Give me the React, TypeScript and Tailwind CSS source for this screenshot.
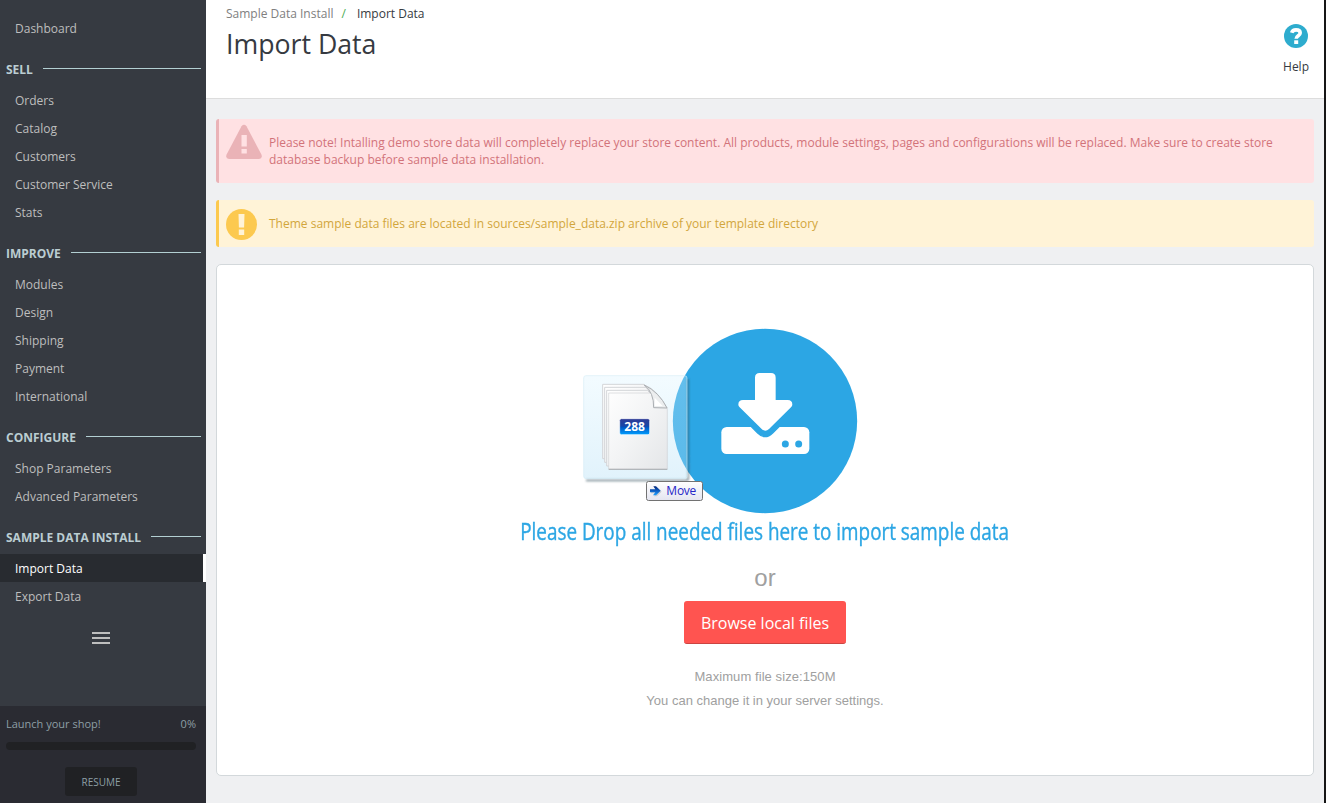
import React from "react";

type Section = { title: string; items: string[] };

const sections: Section[] = [
  { title: "SELL", items: ["Orders", "Catalog", "Customers", "Customer Service", "Stats"] },
  { title: "IMPROVE", items: ["Modules", "Design", "Shipping", "Payment", "International"] },
  { title: "CONFIGURE", items: ["Shop Parameters", "Advanced Parameters"] },
  { title: "SAMPLE DATA INSTALL", items: ["Import Data", "Export Data"] },
];

function NavItem({ label, active = false }: { label: string; active?: boolean }) {
  return (
    <a
      className={
        active
          ? "flex h-7 items-center border-r-3 border-white bg-[#282b30] pt-[2px] pl-[15px] text-white"
          : "flex h-7 items-center pt-[2px] pl-[15px] text-[#bebebe]"
      }
    >
      {label}
    </a>
  );
}

function Sidebar() {
  return (
    <aside className="flex w-[206px] shrink-0 flex-col bg-[#363a41] text-[12px]">
      <nav className="flex flex-1 flex-col pt-[14px]">
        <NavItem label="Dashboard" />
        {sections.map((s) => (
          <div key={s.title}>
            <div className="flex h-11 items-center gap-[10px] pt-[10px] pr-[5px] pl-[6px]">
              <h2 className="pt-[2px] font-bold whitespace-nowrap text-[#bbcdd2]">{s.title}</h2>
              <span className="mb-[2px] h-px flex-1 bg-[#b3cfd2]" />
            </div>
            {s.items.map((i) => (
              <NavItem key={i} label={i} active={i === "Import Data"} />
            ))}
          </div>
        ))}
        <div className="mt-[22px] ml-[92px] flex w-[18px] flex-col gap-[3px]">
          <span className="h-[2px] bg-[#bebebe]" />
          <span className="h-[2px] bg-[#bebebe]" />
          <span className="h-[2px] bg-[#bebebe]" />
        </div>
      </nav>
      <div className="flex h-[97px] flex-col bg-[#2a2b32] pt-[10px] pl-[6px] text-[11px] text-[#8d9fa5]">
        <div className="flex h-4 items-center justify-between pt-px pr-[10px]">
          <span>Launch your shop!</span>
          <span>0%</span>
        </div>
        <div className="mt-[10px] h-2 w-[190px] rounded-full bg-[#202124]" />
        <button className="mt-[17px] ml-[59px] h-[29px] w-[72px] rounded-[3px] bg-[#202124] pt-[2px] text-[10px]">
          RESUME
        </button>
      </div>
    </aside>
  );
}

function DropArt() {
  return (
    <svg className="block h-[200px] w-[300px]" viewBox="0 0 900 600">
      <circle cx="585" cy="303" r="276.500" fill="#2ca6e4" />
      <rect x="454" y="321" width="264" height="81" rx="16" fill="#fff" />
      <path d="M540 316L563 339Q585 361 608 339L631 316Z" fill="#2ca6e4" stroke="#2ca6e4" strokeWidth="4" />
      <path
        d="M569 159H603Q617 159 617 173V240H653Q667 240 667 254Q667 258 663 262L597 327Q586 337 575 327L509 262Q505 258 505 254Q505 240 519 240H555V173Q555 159 569 159Z"
        fill="#fff"
      />
      <circle cx="646" cy="372" r="10.500" fill="#2ca6e4" />
      <circle cx="686" cy="372" r="10.500" fill="#2ca6e4" />
    </svg>
  );
}

function DragGhost() {
  return (
    <svg className="absolute top-[45px] left-[8px] h-[145px] w-[130px]" viewBox="24 135 390 435">
      <defs>
        <linearGradient id="tile" x1="0" y1="0" x2="0" y2="1">
          <stop offset="0" stopColor="#d8f3ff" stopOpacity=".32" />
          <stop offset="1" stopColor="#abdcf5" stopOpacity=".36" />
        </linearGradient>
        <linearGradient id="sheet" x1="0" y1="0" x2="1" y2="1">
          <stop offset="0" stopColor="#ffffff" />
          <stop offset=".5" stopColor="#f3f4f5" />
          <stop offset="1" stopColor="#e4e6e8" />
        </linearGradient>
        <linearGradient id="count" x1="0" y1="0" x2="0" y2="1">
          <stop offset="0" stopColor="#303b96" />
          <stop offset=".48" stopColor="#1748a8" />
          <stop offset=".5" stopColor="#0050bd" />
          <stop offset="1" stopColor="#009fff" />
        </linearGradient>
        <linearGradient id="tip" x1="0" y1="0" x2="0" y2="1">
          <stop offset="0" stopColor="#ffffff" />
          <stop offset="1" stopColor="#e4e5f0" />
        </linearGradient>
        <linearGradient id="arrow" x1="0" y1="0" x2="0" y2="1">
          <stop offset="0" stopColor="#00257a" />
          <stop offset=".5" stopColor="#0f5fc4" />
          <stop offset="1" stopColor="#1ea0ff" />
        </linearGradient>
        <filter id="soft" x="-10%" y="-10%" width="120%" height="120%">
          <feGaussianBlur stdDeviation="3" />
        </filter>
      </defs>
      <path d="M354 176L355 474Q355 481 347 481H48" fill="none" stroke="#37515f" strokeOpacity=".65" strokeWidth="5" filter="url(#soft)" />
      <rect x="41" y="167" width="310" height="309" rx="7" fill="url(#tile)" stroke="#d3edf7" strokeWidth="3" strokeOpacity=".6" />
      <g stroke="#d3d5d8" strokeWidth="3">
        <path d="M98 193H222L272 246V416H98Z" fill="url(#sheet)" />
        <path d="M104 202H228L278 255V427H104Z" fill="url(#sheet)" />
        <path d="M110 211H232L284 262V438H110Z" fill="url(#sheet)" />
      </g>
      <path d="M116 219H242L222 195Q256 203 292 264V447H116Z" fill="url(#sheet)" stroke="#d0d2d4" strokeWidth="2" />
      <path d="M116 448H292" stroke="#a9acaf" strokeWidth="3" />
      <path d="M223 195Q252 218 251 263L291 264Q267 216 223 195Z" fill="#eceeef" stroke="#aaaeb2" strokeWidth="3" />
      <path d="M254 233L278 258H254Z" fill="#fff" />
      <rect x="149" y="296" width="90" height="48" rx="5" fill="url(#count)" stroke="#fff" strokeWidth="2" />
      <text x="194" y="333" textAnchor="middle" fontFamily="Open Sans, sans-serif" fontWeight="700" fontSize="36" fill="#fff">288</text>
      <rect x="229.500" y="484.500" width="168" height="57" rx="6" fill="url(#tip)" stroke="#727272" strokeWidth="3" />
      <path d="M240 508H256L250 499H258L272 512L258 526H249L256 517H240Z" fill="#8f9499" transform="translate(3 3)" opacity=".35" />
      <path d="M240 508H256L250 499H258L272 512L258 526H249L256 517H240Z" fill="url(#arrow)" />
      <text x="289" y="525" textLength="90" fontFamily="Open Sans, sans-serif" fontSize="36" fill="#2626c8">Move</text>
    </svg>
  );
}

export default function App() {
  return (
    <div className="flex h-[803px] w-[1326px] overflow-hidden bg-[#eff0f2] font-['Open_Sans',sans-serif]">
      <Sidebar />
      <main className="flex min-w-0 flex-1 flex-col border-r-2 border-[#161616]">
        <header className="flex h-[99px] shrink-0 justify-between border-b border-[#dddddd] bg-white pr-[15px] pl-5">
          <div className="pt-[5px]">
            <div className="flex h-[18px] items-center text-[12px] whitespace-nowrap">
              <span className="text-[#808080]">Sample Data Install</span>
              <span className="ml-2 text-[#4cae55]">/</span>
              <span className="ml-[11px] text-[#363a41]">Import Data</span>
            </div>
            <h1 className="mt-[3px] text-[26.7px] leading-[36px] text-[#363a41]">Import Data</h1>
          </div>
          <div className="flex flex-col items-center pt-6 text-[12px] text-[#363a41]">
            <svg className="h-6 w-6" viewBox="0 0 24 24">
              <circle cx="12" cy="12" r="12" fill="#2eacce" />
              <path d="M7.700 8.800C8.200 6.900 9.700 5.900 12 5.900C14.500 5.900 16.200 7.100 16.200 9C16.200 11.700 12.200 11.800 12.200 14.700" fill="none" stroke="#fff" strokeWidth="3.600" />
              <rect x="10.200" y="16.300" width="4" height="3.700" fill="#fff" />
            </svg>
            <span className="mt-[10px] leading-[18px]">Help</span>
          </div>
        </header>
        <div className="flex flex-col px-[10px] pt-5">
          <div className="flex h-16 rounded-[3px] border-l-3 border-[#eab3b7] bg-[#ffe1e3] text-[#d2737a]">
            <svg className="mt-[5px] ml-[7px] h-[36px] w-9 shrink-0" viewBox="0 0 36 36">
              <path d="M15.500 2.300Q18 -.600 20.500 2.300L35.400 30.500Q36.800 34.500 33 35H3Q-.800 34.500 .600 30.500Z" fill="#eab3b7" />
              <path d="M15.500 11H20.800V22.500H15.500ZM15.500 25H20.800V29.500H15.500Z" fill="#ffe1e3" />
            </svg>
            <p className="mt-[15px] ml-[7px] text-[12px] leading-[17px] whitespace-nowrap">
              Please note! Intalling demo store data will completely replace your store content. All products, module settings, pages and configurations will be replaced. Make sure to create store
              <br />
              database backup before sample data installation.
            </p>
          </div>
          <div className="mt-[17px] flex h-[47px] items-center rounded-[3px] border-l-3 border-[#fcc94f] bg-[#fff3d7] text-[#d2a63c]">
            <svg className="mt-px ml-[7px] h-[31px] w-[31px] shrink-0" viewBox="0 0 31 31">
              <circle cx="15.500" cy="15.500" r="15.500" fill="#fcc94f" />
              <path d="M12.500 5H18.500L18.100 18.500H12.900ZM12.800 20.500H18.200V26H12.800Z" fill="#fff3d7" />
            </svg>
            <p className="ml-3 text-[12px] leading-[17px]">
              Theme sample data files are located in sources/sample_data.zip archive of your template directory
            </p>
          </div>
          <section className="mt-[17px] flex h-[512px] flex-col items-center rounded-[5px] border border-[#d3d8db] bg-white pt-[55px]">
            <div className="relative h-[200px] w-[300px] translate-x-[-45px]">
              <DropArt />
              <DragGhost />
            </div>
            <h2 className="flex h-6 w-[490px] items-center justify-center pb-[2px] text-[24px] whitespace-nowrap text-[#2ca6e4]">
              <span className="scale-x-[.787] [-webkit-text-stroke:0.4px_#2ca6e4]">
                Please Drop all needed files here to import sample data
              </span>
            </h2>
            <p className="mt-[19px] font-['Liberation_Sans',sans-serif] text-[24px] leading-[30px] text-[#a0a0a0]">or</p>
            <button className="mt-[8px] h-[43px] w-[162px] rounded-[3px] border-b border-[#cb4441] bg-[#ff5450] pt-px text-[16px] text-white">
              Browse local files
            </button>
            <div className="mt-[21px] text-center font-['Liberation_Sans',sans-serif] text-[13px] leading-6 text-[#a0a0a0]">
              <p className="tracking-[.08px]">Maximum file size:150M</p>
              <p>You can change it in your server settings.</p>
            </div>
          </section>
        </div>
      </main>
    </div>
  );
}
